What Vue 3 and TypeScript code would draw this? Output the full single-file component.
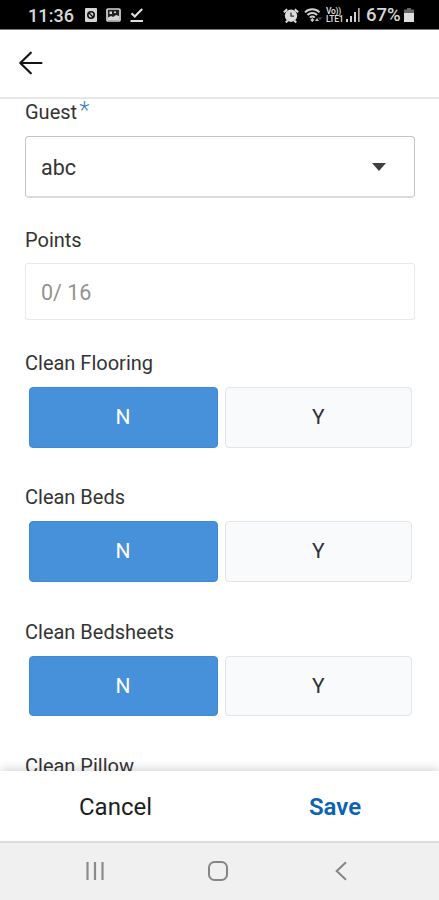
<script setup lang="ts">
import { ref } from 'vue'

interface Question {
  label: string
  answer: 'N' | 'Y'
}

const guest = ref('abc')
const points = ref('0/ 16')
const options = ['N', 'Y'] as const
const questions = ref<Question[]>([
  { label: 'Clean Flooring', answer: 'N' },
  { label: 'Clean Beds', answer: 'N' },
  { label: 'Clean Bedsheets', answer: 'N' },
])
</script>

<template>
  <div class="screen">
    <div class="status">
      <span class="clock">11:36</span>
      <svg class="i-cam" width="12" height="14" viewBox="0 0 12 14">
        <rect width="12" height="14" rx="1" fill="#d6d6d6" />
        <circle cx="6" cy="7" r="3.2" fill="none" stroke="#111" stroke-width="1.6" />
        <path d="M4 5l4 4" stroke="#111" stroke-width="1.2" />
      </svg>
      <svg class="i-img" width="15" height="14" viewBox="0 0 15 14">
        <rect x="1" y="1" width="13" height="12" rx="1" fill="#222" stroke="#d6d6d6" stroke-width="1.7" />
        <path d="M2 12V9.500l3-1.500 2.200 1L10 7l3 1v4z" fill="#d6d6d6" />
        <path d="M3.500 3.500h2.500v2.500H3.500zM8 3.500h2v1.500H8z" fill="#d6d6d6" />
      </svg>
      <svg class="i-check" width="14" height="14" viewBox="0 0 14 14" fill="none" stroke="#dedede" stroke-width="2.200">
        <path d="M1.500 5.200l3.300 3.300L12.200 1M.5 13h12.500" />
      </svg>
      <span class="spacer" />
      <svg class="i-alarm" width="16" height="15" viewBox="0 0 16 15">
        <path d="M.8 4.200L4.200 1.200M15.200 4.200L11.800 1.200M2.800 14.500l2-2M13.200 14.500l-2-2" stroke="#dadada" stroke-width="2" />
        <circle cx="8" cy="7.700" r="6.200" fill="#dadada" />
        <path d="M8 4.500v3.700h3" fill="none" stroke="#333" stroke-width="1.300" />
      </svg>
      <svg class="i-wifi" width="18" height="14" viewBox="0 0 18 14" fill="none" stroke="#d0d0d0" stroke-width="1.900">
        <path d="M1 4.300C5 .3 11.500.3 15.500 4.300M3.500 7c2.700-2.600 7-2.600 9.600 0M5.900 9.600c1.400-1.300 3.500-1.300 4.900 0" />
        <path d="M8.300 10l2 2-2 2-2-2z" fill="#d0d0d0" stroke="none" />
        <path d="M11 13l2-3 2 3z" fill="#c0c0c0" stroke="none" />
        <path d="M14 9.500h4L16 12z" fill="#555" stroke="none" />
      </svg>
      <span class="volte"><span>Vo))</span><span>LTE1</span></span>
      <svg class="i-signal" width="14" height="14" viewBox="0 0 14 14">
        <path d="M0 11h2v3H0zM4 8h2v6H4zM8 4h2v10H8z" fill="#cfcfcf" />
        <path d="M12 0h1.700v14H12z" fill="#aaa" />
      </svg>
      <span class="percent">67%</span>
      <svg class="i-bat" width="10" height="14" viewBox="0 0 10 14">
        <path d="M3 0h4v1.500h3V6H0V1.500h3z" fill="#666" />
        <path d="M0 5h10v9H0z" fill="#dedede" />
      </svg>
    </div>

    <header class="header">
      <svg width="24" height="24" viewBox="0 0 24 24" fill="none" stroke="#151515" stroke-width="2.200" stroke-linecap="round" stroke-linejoin="round">
        <path d="M22.500 12H1.300M11.800 1.700L1.300 12l10.500 10.300" />
      </svg>
    </header>

    <main class="form">
      <div class="label label-guest">Guest<span class="required">*</span></div>
      <div class="select">
        <span>{{ guest }}</span>
        <svg width="14" height="8" viewBox="0 0 14 8"><path d="M0 0h14L7 8z" fill="#404040" /></svg>
      </div>

      <div class="label">Points</div>
      <div class="readonly">{{ points }}</div>

      <div class="questions">
        <section v-for="q in questions" :key="q.label" class="question">
          <div class="label">{{ q.label }}</div>
          <div class="options">
            <button
              v-for="o in options"
              :key="o"
              class="option"
              :class="{ selected: q.answer === o }"
              @click="q.answer = o"
            >{{ o }}</button>
          </div>
        </section>
        <div class="label">Clean Pillow</div>
      </div>
    </main>

    <footer class="actions">
      <button class="action cancel">Cancel</button>
      <button class="action save">Save</button>
    </footer>

    <nav class="nav">
      <svg width="20" height="20" viewBox="0 0 20 20" stroke="#8b8b8b" stroke-width="2.200">
        <path d="M2.500 1v18M10 1v18M17.500 1v18" />
      </svg>
      <svg class="home" width="20" height="20" viewBox="0 0 20 20" fill="none" stroke="#858585" stroke-width="2">
        <rect x="1" y="1" width="18" height="18" rx="5.500" />
      </svg>
      <svg width="12" height="20" viewBox="0 0 12 20" fill="none" stroke="#858585" stroke-width="2">
        <path d="M11 1.200L1.700 10l9.300 8.800" />
      </svg>
    </nav>
  </div>
</template>

<style>
body {
  margin: 0;
  overflow: hidden;
}
</style>

<style scoped>
.screen {
  box-sizing: border-box;
  width: 100%;
  height: 900px;
  display: flex;
  flex-direction: column;
  background: #fff;
  color: #333;
  font-family: Roboto, "Liberation Sans", sans-serif;
  overflow: hidden;
}
svg {
  display: block;
  flex: none;
}
.status {
  box-sizing: border-box;
  flex: none;
  height: 30px;
  padding: 1px 25px 0 28px;
  display: flex;
  align-items: center;
  background: #000;
  border-bottom: 1px solid #777;
  color: #d8d8d8;
}
.clock {
  width: 57px;
  font-size: 18px;
  font-weight: 500;
  letter-spacing: 0.1px;
}
.i-cam { margin-right: 9px; }
.i-img { margin-right: 9px; }
.spacer { flex: 1; }
.i-alarm { margin-right: 5px; }
.i-wifi { margin-right: 4px; }
.volte {
  width: 20px;
  display: flex;
  flex-direction: column;
  font-size: 8.500px;
  line-height: 8px;
  font-weight: 600;
  letter-spacing: -0.300px;
}
.i-signal { margin-right: 6px; }
.percent {
  width: 38px;
  font-size: 18.500px;
  font-weight: 500;
}
.header {
  box-sizing: border-box;
  flex: none;
  height: 69px;
  padding: 0 19px 1px;
  display: flex;
  align-items: center;
  border-bottom: 2px solid #e6e6e6;
}
.form {
  flex: 1;
  min-height: 0;
  padding: 1px 24px 0 25px;
  overflow: hidden;
}
.label {
  height: 24px;
  font-size: 20px;
  line-height: 24px;
  white-space: nowrap;
}
.label-guest {
  display: flex;
}
.required {
  margin-left: 2px;
  color: #3a7fc8;
  font-size: 24px;
  font-weight: 300;
  line-height: 20px;
}
.select {
  box-sizing: border-box;
  height: 62px;
  margin: 12px 0 30px;
  padding: 1px 28px 0 15px;
  display: flex;
  align-items: center;
  justify-content: space-between;
  border: 1.500px solid #c4c4c4;
  border-bottom: 2px solid #dadada;
  border-radius: 4px;
  font-size: 21.500px;
}
.readonly {
  box-sizing: border-box;
  height: 57px;
  margin: 11px 0 31px;
  padding: 1px 15px 0;
  display: flex;
  align-items: center;
  border: 1px solid #e8e8e8;
  border-radius: 3px;
  color: #929292;
  font-size: 21.500px;
}
.questions {
  display: flex;
  flex-direction: column;
  gap: 37.700px;
}
.options {
  display: grid;
  grid-template-columns: 189px 186.500px;
  gap: 7.500px;
  margin-top: 12px;
  padding-left: 3.500px;
}
.option {
  height: 60.700px;
  padding: 0 0 1px;
  border: 1.500px solid #e2e4e6;
  border-radius: 4px;
  background: #f8fafc;
  color: #333;
  font: 400 21px Roboto, "Liberation Sans", sans-serif;
}
.option.selected {
  border-color: #3f8ad6;
  background: #4791db;
  color: #fff;
}
.actions {
  flex: none;
  height: 70px;
  display: flex;
  background: #fff;
  box-shadow: 0 -1px 10px rgba(0, 0, 0, 0.2);
}
.action {
  padding: 1px 0 0;
  border: 0;
  background: none;
  font: 400 24px Roboto, "Liberation Sans", sans-serif;
}
.cancel {
  width: 231px;
  color: #1e1e1e;
}
.save {
  width: 208px;
  color: #0b62b4;
  font-weight: 600;
}
.nav {
  box-sizing: border-box;
  flex: none;
  height: 59px;
  padding: 0 92px 1px 85px;
  display: flex;
  align-items: center;
  justify-content: space-between;
  background: #f0f0f0;
  border-top: 2px solid #dcdcdc;
}
.home {
  margin-right: 4px;
}
</style>
